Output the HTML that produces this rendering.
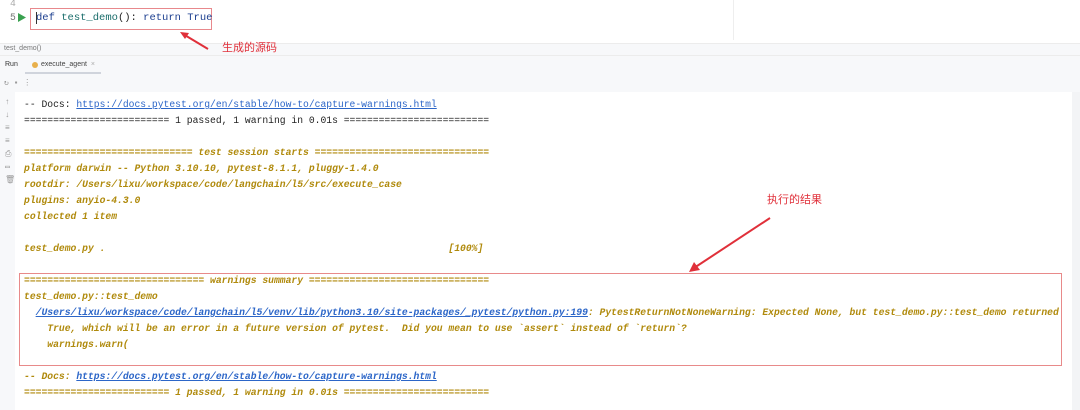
<!DOCTYPE html>
<html><head><meta charset="utf-8"><style>
*{margin:0;padding:0;box-sizing:border-box}
body{width:1080px;height:410px;background:#fff;position:relative;overflow:hidden;font-family:"Liberation Mono",monospace}
.abs{position:absolute;white-space:pre}
.m{font-size:9.7px;line-height:16px}
.k{color:#222}
.y{color:#b08a0c;font-style:italic;font-weight:bold}
.a{color:#2c66c8;text-decoration:underline}
.cn{font-family:"Liberation Sans","Noto Sans CJK SC",sans-serif;color:#e0303a;font-size:11px;z-index:5}
</style></head><body>
<div class="abs" style="left:0;top:0;width:1080px;height:40px;background:#fff"></div>
<div class="abs" style="left:733px;top:0;width:1px;height:40px;background:#eee"></div>
<div class="abs m" style="left:10px;top:-4px;color:#aaa">4</div>
<div class="abs m" style="left:10px;top:10px;color:#777">5</div>
<svg class="abs" style="left:18px;top:13px" width="8" height="9"><polygon points="0,0 8,4.5 0,9" fill="#3aa150"/></svg>
<div class="abs" style="left:30px;top:8px;width:182px;height:22px;border:1px solid #e8888c"></div>
<div class="abs m" style="left:36px;top:10px;font-size:10.5px;color:#1b3e8f">def <span style="color:#1a6d6b">test_demo</span><span style="color:#222">():</span> return True</div>
<div class="abs" style="left:36px;top:12px;width:1px;height:12px;background:#333"></div>
<div class="abs" style="left:0;top:43px;width:1080px;height:13px;background:#f7f8fa;border-top:1px solid #ececec;border-bottom:1px solid #ececec"></div>
<div class="abs" style="left:4px;top:45px;font-family:'Liberation Sans',sans-serif;font-size:7px;color:#777">test_demo()</div>
<svg class="abs" style="left:178px;top:30px;z-index:5" width="32" height="22"><line x1="30" y1="19" x2="5" y2="4" stroke="#e0303a" stroke-width="2"/><polygon points="2,2 11,3 7,9" fill="#e0303a"/></svg>
<div class="abs cn" style="left:222px;top:39px">生成的源码</div>
<div class="abs" style="left:0;top:56px;width:1080px;height:354px;background:#f7f8fa"></div>
<div class="abs" style="left:5px;top:61px;font-family:'Liberation Sans',sans-serif;font-size:7px;color:#333">Run</div>
<div class="abs" style="left:25px;top:56px;width:76px;height:18px;border-bottom:2px solid #d0d4dc"></div>
<div class="abs" style="left:32px;top:62px;width:6px;height:6px;border-radius:50%;background:#e8b04c"></div>
<div class="abs" style="left:41px;top:61px;font-family:'Liberation Sans',sans-serif;font-size:7px;color:#444">execute_agent  <span style="color:#aaa">×</span></div>
<div class="abs" style="left:4px;top:78px;font-size:8px;color:#999">↻ ▪ ⋮</div>
<div class="abs" style="left:15px;top:92px;width:1058px;height:318px;background:#fff"></div>
<div class="abs" style="left:1072px;top:92px;width:8px;height:318px;background:#f3f4f6"></div>
<div class="abs" style="left:5px;top:96px;font-size:8px;line-height:13px;color:#999">↑<br>↓<br>≡<br>≡<br>⎙<br>▭<br>🗑</div>
<div class="abs m" style="left:24px;top:97px"><span class="k">-- Docs: <span class="a">https://docs.pytest.org/en/stable/how-to/capture-warnings.html</span>
========================= 1 passed, 1 warning in 0.01s =========================</span>

<span class="y">============================= test session starts ==============================
platform darwin -- Python 3.10.10, pytest-8.1.1, pluggy-1.4.0
rootdir: /Users/lixu/workspace/code/langchain/l5/src/execute_case
plugins: anyio-4.3.0
collected 1 item

test_demo.py .                                                           [100%]

=============================== warnings summary ===============================
test_demo.py::test_demo
  <span class="a">/Users/lixu/workspace/code/langchain/l5/venv/lib/python3.10/site-packages/_pytest/python.py:199</span>: PytestReturnNotNoneWarning: Expected None, but test_demo.py::test_demo returned
    True, which will be an error in a future version of pytest.  Did you mean to use `assert` instead of `return`?
    warnings.warn(

-- Docs: <span class="a">https://docs.pytest.org/en/stable/how-to/capture-warnings.html</span>
========================= 1 passed, 1 warning in 0.01s =========================</span></div>
<div class="abs" style="left:19px;top:273px;width:1043px;height:93px;border:1px solid #e88a8a;z-index:4"></div>
<div class="abs cn" style="left:767px;top:191px">执行的结果</div>
<svg class="abs" style="left:686px;top:216px" width="86" height="58"><line x1="84" y1="2" x2="8" y2="52" stroke="#e0303a" stroke-width="2"/><polygon points="3,56 8,46 14,54" fill="#e0303a"/></svg>
</body></html>
